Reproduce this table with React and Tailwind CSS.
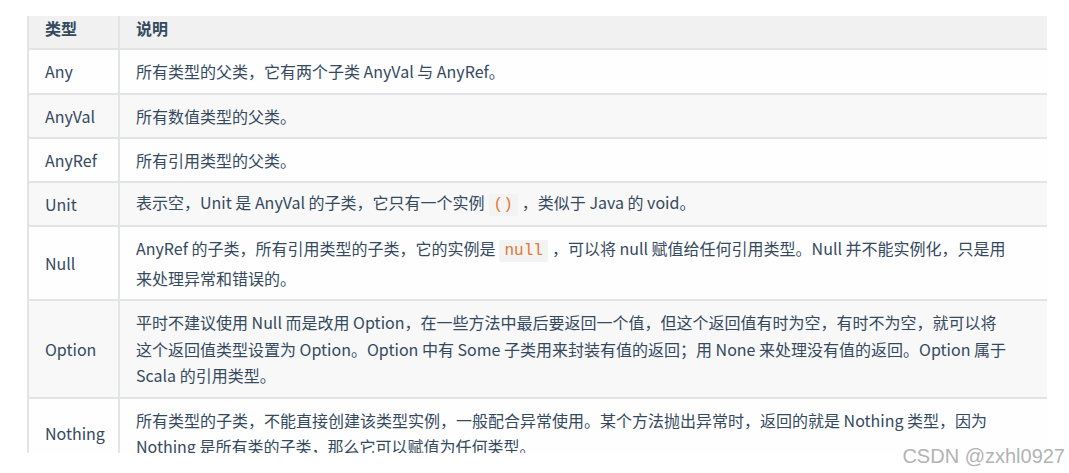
import React from 'react';

const body = '"Noto Sans CJK SC", "Noto Sans", sans-serif';

function Code({ children }) {
  return (
    <code className="mx-[4px] rounded-[2px] bg-[#f3f3f3] px-[5px] py-[2px] font-['Liberation_Mono',monospace] text-[16px] text-[#e3772f]">
      {children}
    </code>
  );
}

const rows = [
  { name: 'Any', h: 'h-[45px]', lines: ['所有类型的父类，它有两个子类 AnyVal 与 AnyRef。'] },
  { name: 'AnyVal', h: 'h-[44px]', lines: ['所有数值类型的父类。'] },
  { name: 'AnyRef', h: 'h-[44px]', lines: ['所有引用类型的父类。'] },
  {
    name: 'Unit',
    h: 'h-[44px]',
    lines: [<>表示空，Unit 是 AnyVal 的子类，它只有一个实例<Code>()</Code>，类似于 Java 的 void。</>],
  },
  {
    name: 'Null',
    h: 'h-[74px]',
    lines: [
      <>AnyRef 的子类，所有引用类型的子类，它的实例是<Code>null</Code>，可以将 null 赋值给任何引用类型。Null 并不能实例化，只是用</>,
      '来处理异常和错误的。',
    ],
  },
  {
    name: 'Option',
    h: 'h-[98px]',
    lines: [
      '平时不建议使用 Null 而是改用 Option，在一些方法中最后要返回一个值，但这个返回值有时为空，有时不为空，就可以将',
      '这个返回值类型设置为 Option。Option 中有 Some 子类用来封装有值的返回；用 None 来处理没有值的返回。Option 属于',
      'Scala 的引用类型。',
    ],
  },
  {
    name: 'Nothing',
    h: 'h-[70px]',
    lines: [
      '所有类型的子类，不能直接创建该类型实例，一般配合异常使用。某个方法抛出异常时，返回的就是 Nothing 类型，因为',
      'Nothing 是所有类的子类，那么它可以赋值为任何类型。',
    ],
  },
];

export default function App() {
  return (
    <div className="relative h-[473px] w-[1069px] overflow-hidden bg-white" style={{ fontFamily: body }}>
      <div className="ml-[27px] mt-[16px] h-[437px] w-[1020px] overflow-hidden border-l-2 border-[#e3e4e8] text-[16px] leading-[26.5px] text-[#34495e]">
        {/* header */}
        <div className="flex h-[34px] border-b-2 border-[#e3e4e8] bg-[#f1f1f1] font-bold leading-[24px]">
          <div className="w-[91px] shrink-0 border-r-2 border-[#e3e4e8] pl-[16px]">类型</div>
          <div className="flex-1 pl-[16px]">说明</div>
        </div>

        {rows.map((r, i) => (
          <div
            key={r.name}
            className={`flex shrink-0 border-b-2 border-[#e3e4e8] ${r.h} ${i % 2 === 1 ? 'bg-[#f8f8f8]' : 'bg-[#fefefe]'}`}
          >
            <div className="flex w-[91px] shrink-0 items-center border-r-2 border-[#e3e4e8] pl-[16px]">{r.name}</div>
            <div className="flex flex-1 flex-col justify-center whitespace-nowrap pl-[16px]">
              {r.lines.map((l, j) => (
                <div key={j}>{l}</div>
              ))}
            </div>
          </div>
        ))}
      </div>

      <div className="absolute bottom-[7px] right-[4px] font-['Liberation_Sans',sans-serif] text-[20px] leading-none text-[#b3b3b3]">
        CSDN @zxhl0927
      </div>
    </div>
  );
}
